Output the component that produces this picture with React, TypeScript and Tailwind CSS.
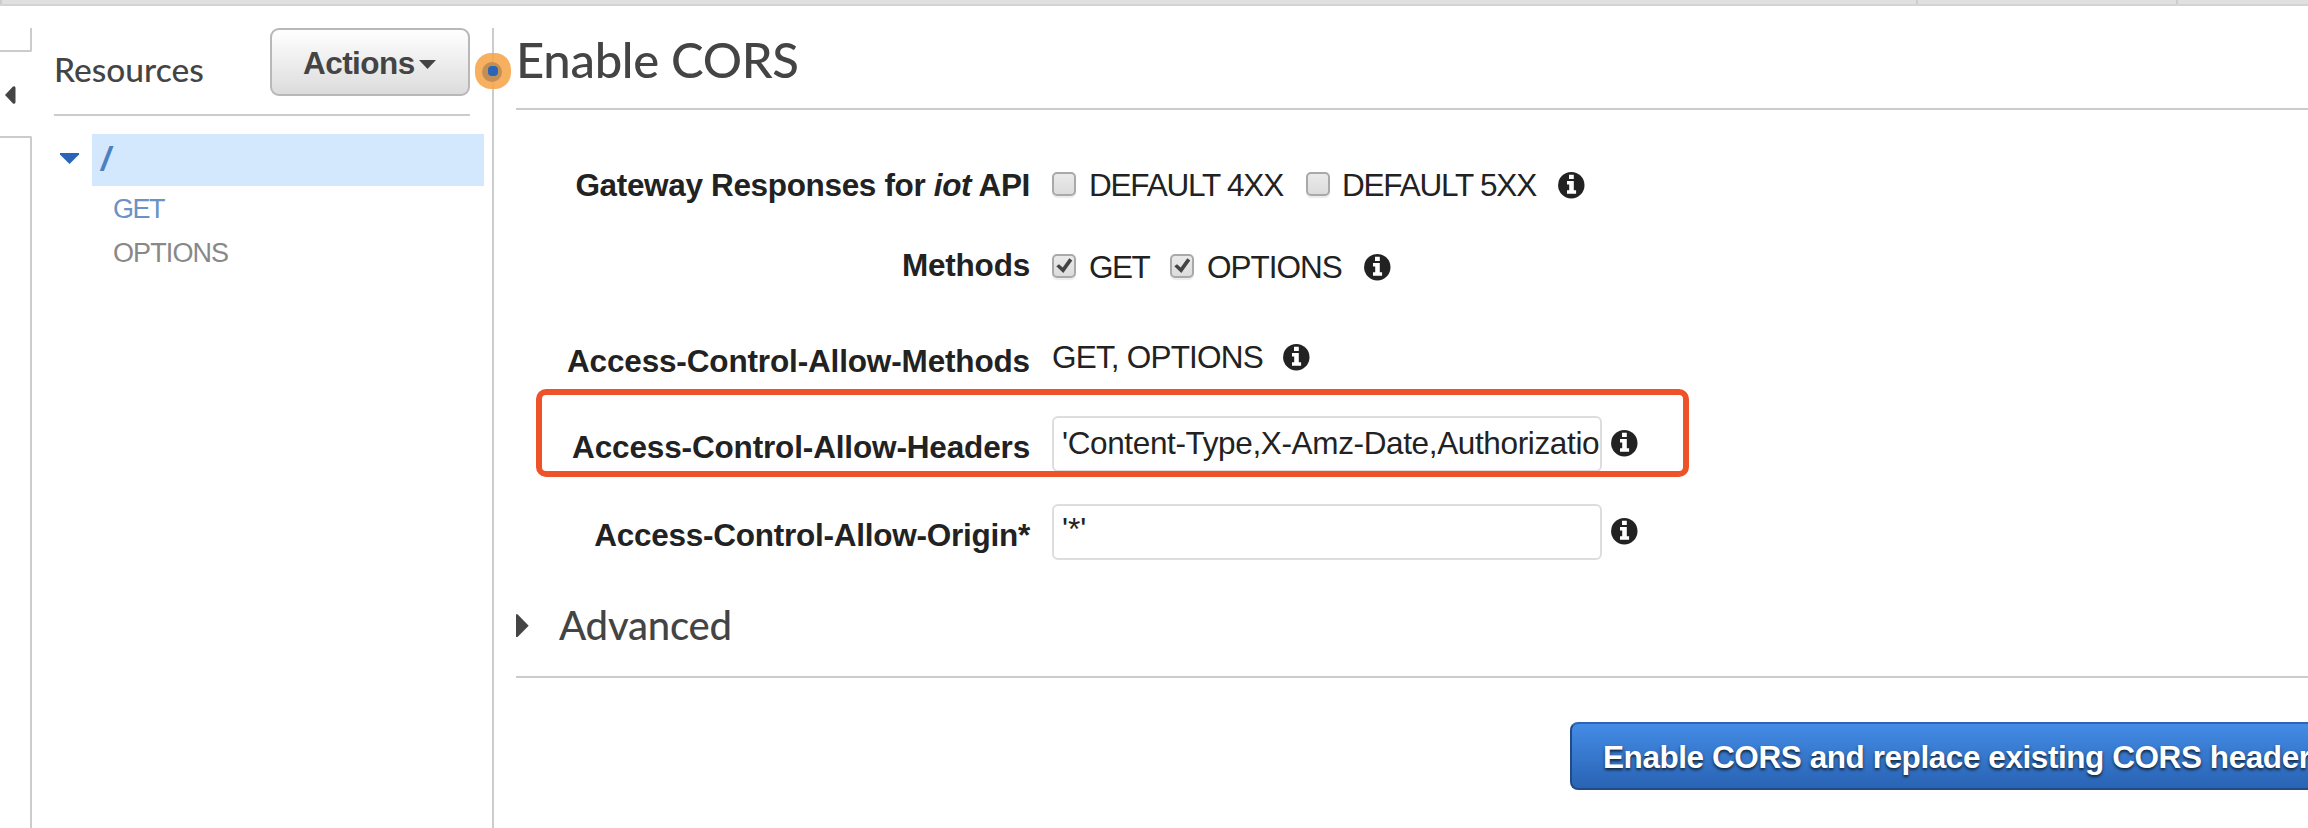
import React from "react";

const FACE = "font-['Liberation_Sans',Arial,sans-serif] text-[31.5px] leading-[36px] whitespace-nowrap text-[#222]";

function InfoIcon() {
  return (
    <svg width="27" height="27" viewBox="0 0 27 27" className="block shrink-0">
      <circle cx="13.3" cy="13.2" r="13.2" fill="#222" />
      <path d="M11 2.800h4.800v4.200H11zM9 9h6.800v9.200h2.300v3.500H9v-3.500h2.200v-5.700H9z" fill="#fff" />
    </svg>
  );
}

function Checkbox({ checked }: { checked?: boolean }) {
  return (
    <span className="mt-1 box-border flex h-[24px] w-[24px] shrink-0 rounded-[5px] border-2 border-[#a9a9a9] bg-linear-to-b from-[#eaeaea] to-[#dcdcdc] shadow-[0_2px_1px_#ececec]">
      {checked && (
        <svg width="20" height="20" viewBox="2 2 20 20">
          <path d="M4.300 12.300 7 10.200l3.700 3.300L17.300 4.200l3 2.300L11.300 19z" fill="#444" />
        </svg>
      )}
    </span>
  );
}

function Label({ className, children }: { className: string; children: React.ReactNode }) {
  return <div className={`w-[514px] shrink-0 text-right font-bold ${className} ${FACE}`}>{children}</div>;
}

function Sidebar() {
  return (
    <aside className="flex w-[460px] shrink-0 flex-col">
      <div className="flex h-[88px] w-[416px] justify-between border-b-2 border-[#ccc]">
        <h2 className="mt-[21px] font-['Lato',sans-serif] text-[33.5px] leading-[40px] font-medium text-[#444]">Resources</h2>
        <button className="flex h-[68px] w-[200px] items-center rounded-[9px] border-2 border-[#b8b8b8] bg-linear-to-b from-white to-[#dcdcdc] pl-[31px] font-['Liberation_Sans',Arial,sans-serif] text-[31.5px] font-bold tracking-[-0.55px] text-[#444]">
          <span className="pt-[3px]">Actions</span>
          <svg width="17" height="9" viewBox="0 0 17 9" className="mt-1 ml-[4px] shrink-0">
            <path d="M0 0h17L8.5 9z" fill="#444" />
          </svg>
        </button>
      </div>
      <div className="mt-[18px] flex h-[52px] w-[430px]">
        <svg width="38" height="52" viewBox="0 0 38 52" className="shrink-0">
          <path d="M6 19h19v1.500L15.500 30 6 20.500z" fill="#2a65b8" />
        </svg>
        <div className="flex-1 bg-[#d3e8fd] pl-[9px] font-['Liberation_Sans',Arial,sans-serif] text-[34px] leading-[48px] font-bold text-[#4d80c0] italic">/</div>
      </div>
      <div className="flex flex-col pt-px pl-[59px] font-['Liberation_Sans',Arial,sans-serif] text-[27px] leading-[44px]">
        <span className="tracking-[-1.5px] text-[#6a92c6]">GET</span>
        <span className="tracking-[-0.9px] text-[#888]">OPTIONS</span>
      </div>
    </aside>
  );
}

export default function App() {
  return (
    <div className="relative flex h-[828px] w-[2308px] flex-col overflow-hidden bg-white">
      <div className="flex h-[6px] shrink-0 border-b-2 border-[#d4d4d4] bg-[#e0e0e0]">
        <div className="w-[2px] bg-[#ccc]" />
        <div className="ml-[1914px] w-[2px] bg-[#ccc]" />
        <div className="ml-[258px] w-[2px] bg-[#ccc]" />
      </div>
      <div className="mt-[22px] flex flex-1">
        <div className="flex w-8 shrink-0 flex-col">
          <div className="h-[24px] rounded-br-[2px] border-r-2 border-b-2 border-[#ccc]" />
          <div className="flex h-[84px] items-center">
            <svg width="12" height="18" viewBox="0 0 12 18" className="mt-[2px] ml-[5px]">
              <path d="M0 9 8 0.5Q10.500 -0.500 10.500 2V16Q10.500 18.500 8 17.500z" fill="#444" />
            </svg>
          </div>
          <div className="flex-1 rounded-tr-[2px] border-t-2 border-r-2 border-[#ccc]" />
        </div>
        <div className="ml-[22px] flex w-[438px] shrink-0">
          <Sidebar />
        </div>
        <div className="w-[2px] shrink-0 bg-[#ccc]" />
        <main className="ml-[22px] flex min-w-0 flex-1 flex-col">
          <div className="h-[82px] border-b-2 border-[#ccc]">
            <h1 className="mt-px font-['Lato',sans-serif] text-[49px] leading-[60px] font-medium tracking-[-0.3px] text-[#444]">Enable CORS</h1>
          </div>
          <div className="flex flex-col pt-[58px]">
            <div className="flex h-[82px] items-start">
              <Label className="-mt-px tracking-[-0.34px]">Gateway Responses for <i>iot</i> API</Label>
              <div className="ml-[22px] flex items-start">
                <Checkbox />
                <span className={`-mt-px ml-[13px] w-[217px] tracking-[-1.2px] ${FACE}`}>DEFAULT 4XX</span>
                <Checkbox />
                <span className={`-mt-px ml-[12px] w-[216px] tracking-[-1.2px] ${FACE}`}>DEFAULT 5XX</span>
                <div className="mt-1"><InfoIcon /></div>
              </div>
            </div>
            <div className="flex h-[92px] items-start">
              <Label className="-mt-[3px] tracking-[-0.2px]">Methods</Label>
              <div className="ml-[22px] flex items-start">
                <Checkbox checked />
                <span className={`-mt-px ml-[13px] w-[81px] tracking-[-1.5px] ${FACE}`}>GET</span>
                <Checkbox checked />
                <span className={`-mt-px ml-[13px] w-[157px] tracking-[-1px] ${FACE}`}>OPTIONS</span>
                <div className="mt-1"><InfoIcon /></div>
              </div>
            </div>
            <div className="flex h-[74px] items-start">
              <Label className="mt-px tracking-[-0.15px]">Access-Control-Allow-Methods</Label>
              <div className="ml-[22px] flex items-start">
                <span className={`-mt-[3px] w-[231px] tracking-[-0.8px] ${FACE}`}>GET, OPTIONS</span>
                <div className="mt-[2px]"><InfoIcon /></div>
              </div>
            </div>
            <div className="flex h-[88px] items-start">
              <Label className="mt-[13px] tracking-[-0.15px]">Access-Control-Allow-Headers</Label>
              <div className={`ml-[22px] h-[56px] w-[550px] rounded-[6px] border-2 border-[#ddd] pt-[7px] pl-[8px] tracking-[-0.36px] ${FACE}`}>'Content-Type,X-Amz-Date,Authorizatio</div>
              <div className="mt-[14px] ml-[9px]"><InfoIcon /></div>
            </div>
            <div className="flex h-[88px] items-start">
              <Label className="mt-[13px] tracking-[-0.25px]">Access-Control-Allow-Origin*</Label>
              <div className={`ml-[22px] h-[56px] w-[550px] rounded-[6px] border-2 border-[#ddd] pt-[5px] pl-[8px] ${FACE}`}>'*'</div>
              <div className="mt-[14px] ml-[9px]"><InfoIcon /></div>
            </div>
          </div>
          <div className="flex h-[86px] border-b-2 border-[#ccc]">
            <svg width="14" height="26" viewBox="0 0 14 26" className="mt-[21px] shrink-0">
              <path d="M0 1.300h1.500L12.700 12.700 1.500 24H0z" fill="#444" />
            </svg>
            <h2 className="mt-[9px] ml-[29px] font-['Lato',sans-serif] text-[40px] leading-[48px] font-medium tracking-[-0.2px] text-[#444]">Advanced</h2>
          </div>
          <div className="mt-[44px] flex justify-end">
            <button className="flex h-[68px] w-[738px] shrink-0 items-center rounded-l-[8px] border-2 border-r-0 border-t-[#2a65b8] border-b-[#204b86] border-l-[#204b86] bg-linear-to-b from-[#448ce6] to-[#2963b4] pt-[3px] pl-[31px] font-['Liberation_Sans',Arial,sans-serif] text-[31.5px] font-bold tracking-[-0.43px] whitespace-nowrap text-white [text-shadow:0_2px_3px_#123]">
              Enable CORS and replace existing CORS headers
            </button>
          </div>
        </main>
      </div>
      <div className="absolute top-[389px] left-[536px] h-[88px] w-[1153px] rounded-[10px] border-6 border-[#ee5228]" />
      <svg className="absolute top-[52px] left-[474px]" width="38" height="38" viewBox="0 0 38 38">
        <rect x="1" y="1" width="36" height="36" rx="16" fill="#f6a54a" fillOpacity="0.88" />
        <circle cx="18" cy="20" r="10" fill="#c48f54" />
        <rect x="14" y="14" width="10" height="10" rx="4" fill="#2a65b8" />
      </svg>
    </div>
  );
}
